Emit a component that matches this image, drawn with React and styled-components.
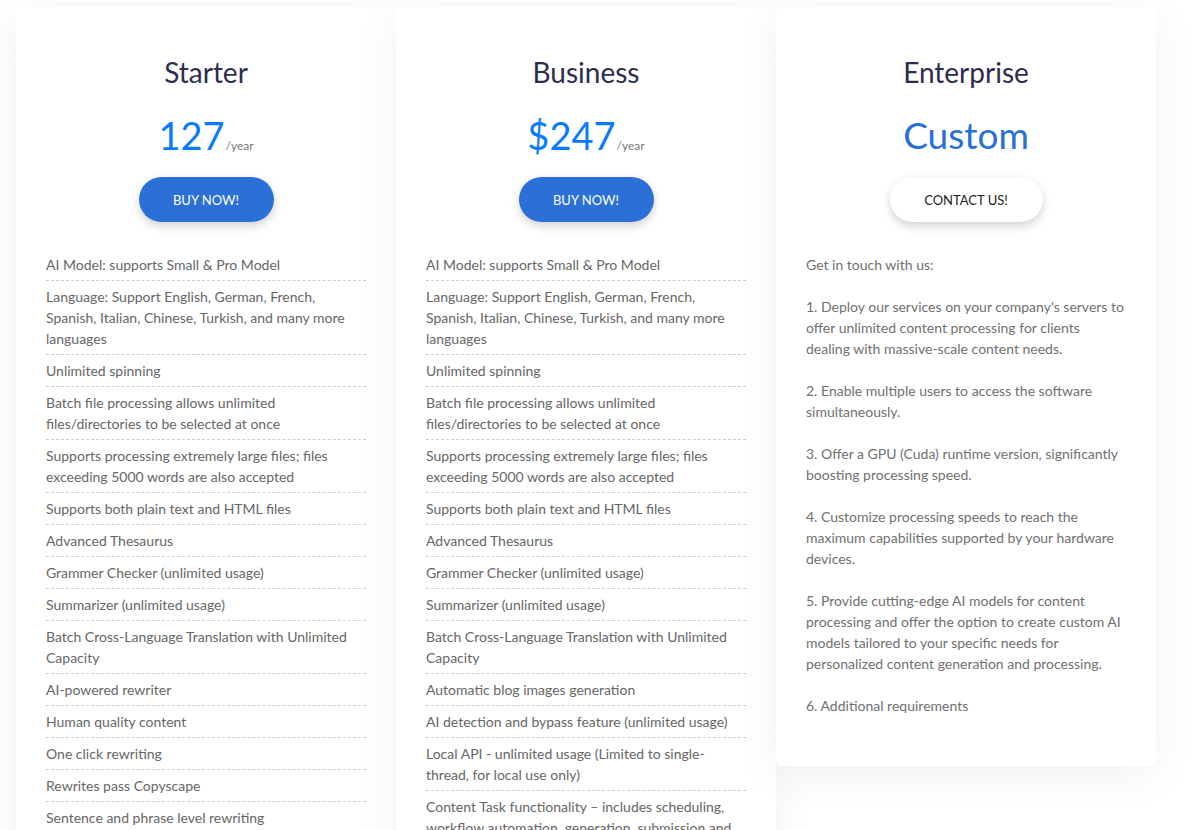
import React from 'react';
import styled, { createGlobalStyle } from 'styled-components';

const GlobalStyle = createGlobalStyle`
    html, body {
        margin: 0;
        padding: 0;
        background: #ffffff;
    }
    body {
        font-family: Lato, "Noto Sans", "Liberation Sans", sans-serif;
        overflow: hidden;
    }
`

const Wrapper = styled.div`
    display: flex;
    align-items: flex-start;
    padding: 7px 0 0 16px;
    width: 1194px;
    height: 830px;
    box-sizing: border-box;
    overflow: hidden;
`

const Card = styled.div`
    flex: 0 0 380px;
    box-sizing: border-box;
    padding: 48px 30px 50px;
    background: #ffffff;
    border-radius: 6px;
    box-shadow: 0 8px 40px rgba(60, 80, 120, 0.08);
    display: flex;
    flex-direction: column;
    align-items: center;
`

const Title = styled.h3`
    margin: 0;
    font-size: 28px;
    line-height: 34px;
    font-weight: 400;
    color: #2e2d50;
`

const Price = styled.div`
    margin-top: 23px;
    height: 46px;
    text-align: center;
    color: ${props => props.custom ? '#2a6fd6' : '#0a7bff'};
    font-size: ${props => props.custom ? '37px' : '38px'};
    line-height: 46px;
`

const Per = styled.span`
    font-size: 12px;
    line-height: 1;
    color: #777777;
    margin-left: 1px;
`

const Button = styled.button`
    margin-top: 19px;
    height: 45px;
    width: ${props => props.light ? '153px' : '135px'};
    border: none;
    border-radius: 23px;
    background: ${props => props.light ? '#ffffff' : '#2a70d6'};
    color: ${props => props.light ? '#222222' : '#ffffff'};
    font-family: inherit;
    font-size: 13px;
    text-transform: uppercase;
    box-shadow: 0 4px 10px rgba(0, 0, 0, 0.18);
    cursor: pointer;
`

const List = styled.ul`
    list-style: none;
    margin: 27px 0 0;
    padding: 0;
    width: 100%;
`

const Item = styled.li`
    padding: 5px 0;
    border-bottom: 1px dashed #cfcfcf;
    font-size: 14px;
    line-height: 21px;
    color: #666666;
    text-align: left;
`

const Note = styled.div`
    margin-top: 27px;
    padding-top: 5px;
    width: 100%;
    white-space: pre-line;
    font-size: 14px;
    line-height: 21px;
    color: #707070;
    text-align: left;
`

const starter = [
    'AI Model: supports Small & Pro Model',
    'Language: Support English, German, French, Spanish, Italian, Chinese, Turkish, and many more languages',
    'Unlimited spinning',
    'Batch file processing allows unlimited files/directories to be selected at once',
    'Supports processing extremely large files; files exceeding 5000 words are also accepted',
    'Supports both plain text and HTML files',
    'Advanced Thesaurus',
    'Grammer Checker (unlimited usage)',
    'Summarizer (unlimited usage)',
    'Batch Cross-Language Translation with Unlimited Capacity',
    'AI-powered rewriter',
    'Human quality content',
    'One click rewriting',
    'Rewrites pass Copyscape',
    'Sentence and phrase level rewriting',
    'Word level rewriting',
    'Free updates',
]

const business = [
    'AI Model: supports Small & Pro Model',
    'Language: Support English, German, French, Spanish, Italian, Chinese, Turkish, and many more languages',
    'Unlimited spinning',
    'Batch file processing allows unlimited files/directories to be selected at once',
    'Supports processing extremely large files; files exceeding 5000 words are also accepted',
    'Supports both plain text and HTML files',
    'Advanced Thesaurus',
    'Grammer Checker (unlimited usage)',
    'Summarizer (unlimited usage)',
    'Batch Cross-Language Translation with Unlimited Capacity',
    'Automatic blog images generation',
    'AI detection and bypass feature (unlimited usage)',
    'Local API - unlimited usage (Limited to single-thread, for local use only)',
    'Content Task functionality – includes scheduling, workflow automation, generation, submission and publishing',
    'AI-powered rewriter',
]

const enterprise = `Get in touch with us:

1. Deploy our services on your company's servers to offer unlimited content processing for clients dealing with massive-scale content needs.

2. Enable multiple users to access the software simultaneously.

3. Offer a GPU (Cuda) runtime version, significantly boosting processing speed.

4. Customize processing speeds to reach the maximum capabilities supported by your hardware devices.

5. Provide cutting-edge AI models for content processing and offer the option to create custom AI models tailored to your specific needs for personalized content generation and processing.

6. Additional requirements`

const Plan = ({ title, price, items }) => (
    <Card>
        <Title>{title}</Title>
        <Price>{price}<Per>/year</Per></Price>
        <Button>Buy now!</Button>
        <List>
            {items.map(text => <Item key={text}>{text}</Item>)}
        </List>
    </Card>
)

const App = () => {
    return (
        <>
            <GlobalStyle />
            <Wrapper>
                <Plan title="Starter" price="127" items={starter} />
                <Plan title="Business" price="$247" items={business} />
                <Card>
                    <Title>Enterprise</Title>
                    <Price custom>Custom</Price>
                    <Button light>Contact us!</Button>
                    <Note>{enterprise}</Note>
                </Card>
            </Wrapper>
        </>
    )
}

export default App;
